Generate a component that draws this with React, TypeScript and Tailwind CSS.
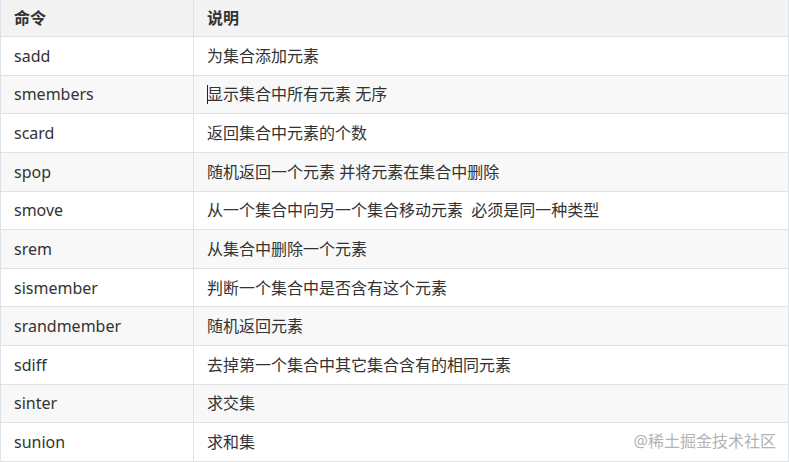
import React from 'react';

const rows: [string, string][] = [
  ['sadd', '为集合添加元素'],
  ['smembers', '显示集合中所有元素 无序'],
  ['scard', '返回集合中元素的个数'],
  ['spop', '随机返回一个元素 并将元素在集合中删除'],
  ['smove', '从一个集合中向另一个集合移动元素  必须是同一种类型'],
  ['srem', '从集合中删除一个元素'],
  ['sismember', '判断一个集合中是否含有这个元素'],
  ['srandmember', '随机返回元素'],
  ['sdiff', '去掉第一个集合中其它集合含有的相同元素'],
  ['sinter', '求交集'],
  ['sunion', '求和集'],
];

const App: React.FC = () => {
  return (
    <div
      className="relative w-[789px] h-[462px] overflow-hidden bg-white text-[16px] text-[#333]"
      style={{ fontFamily: '"Noto Sans", "Noto Sans CJK SC", sans-serif' }}
    >
      <div className="w-[789px] border-b border-[#dfe2e5]">
        {/* header */}
        <div className="flex h-[36px] bg-[#f3f3f3] font-bold">
          <div className="flex w-[194px] items-center border-l border-r border-[#dfe2e5] pl-[13px]">命令</div>
          <div className="flex flex-1 items-center border-r border-[#dfe2e5] pl-[13px]">说明</div>
        </div>

        {rows.map(([cmd, desc], i) => (
          <div
            key={cmd}
            className={`flex h-[38.64px] border-t border-[#dfe2e5] ${i % 2 === 1 ? 'bg-[#f8f8f8]' : 'bg-white'}`}
          >
            <div className="flex w-[194px] items-center border-l border-r border-[#dfe2e5] pl-[13px]">{cmd}</div>
            <div className="flex flex-1 items-center whitespace-pre border-r border-[#dfe2e5] pl-[13px]">
              {i === 1 && <span className="mr-[-1px] inline-block h-[19px] w-[1px] bg-[#222]" />}
              {desc}
            </div>
          </div>
        ))}
      </div>

      {/* watermark */}
      <div className="absolute bottom-[9px] right-[13px] text-[16px] text-[#b3b3b3]">@稀土掘金技术社区</div>
    </div>
  );
};

export default App;
